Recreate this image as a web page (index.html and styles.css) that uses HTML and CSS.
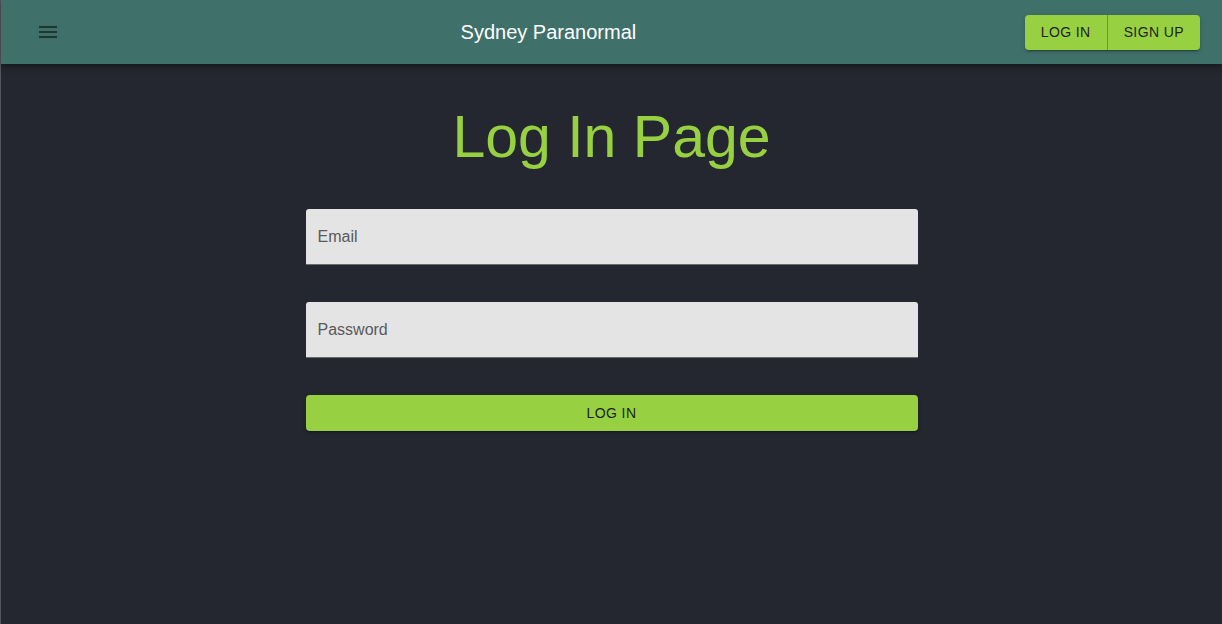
FILE: index.html
```html
<!DOCTYPE html>
<html lang="en">
<head>
<meta charset="utf-8">
<title>Sydney Paranormal</title>
<link rel="stylesheet" href="styles.css">
</head>
<body>
<div class="app">
  <header class="appbar">
    <button class="icon-btn" aria-label="menu">
      <svg viewBox="0 0 24 24" width="24" height="24"><path d="M3 18h18v-2H3v2zm0-5h18v-2H3v2zm0-7v2h18V6H3z" fill="currentColor"/></svg>
    </button>
    <div class="brand">Sydney Paranormal</div>
    <div class="btn-group">
      <button class="gbtn">Log In</button>
      <button class="gbtn">Sign Up</button>
    </div>
  </header>
  <main class="content">
    <h1 class="page-title">Log In Page</h1>
    <form class="form">
      <div class="field"><span class="label">Email</span></div>
      <div class="field"><span class="label">Password</span></div>
      <button type="button" class="submit">Log In</button>
    </form>
  </main>
</div>
</body>
</html>
```
FILE: styles.css
```css
* { box-sizing: border-box; }
html, body { margin: 0; padding: 0; height: 100%; }
body {
  background: #242730;
  font-family: "Liberation Sans", Arial, Helvetica, sans-serif;
}
.app {
  min-height: 100%;
  height: 624px;
  border-left: 1px solid rgba(255,255,255,0.22);
  display: flex;
  flex-direction: column;
}
.appbar {
  height: 64px;
  background: #40706a;
  display: flex;
  align-items: center;
  padding: 0 22px 0 23px;
  box-shadow: 0 2px 4px -1px rgba(0,0,0,0.2), 0 4px 5px 0 rgba(0,0,0,0.14), 0 1px 10px 0 rgba(0,0,0,0.12);
  position: relative;
  z-index: 1;
}
.icon-btn {
  width: 48px;
  height: 48px;
  padding: 12px;
  border: 0;
  background: transparent;
  color: #1e3531;
  display: flex;
  align-items: center;
  justify-content: center;
}
.icon-btn svg { display: block; }
.brand {
  flex: 1;
  text-align: center;
  color: #ffffff;
  font-size: 20px;
  line-height: 32px;
  margin-top: -1px;
}
.btn-group {
  display: flex;
  border-radius: 4px;
  box-shadow: 0 3px 1px -2px rgba(0,0,0,0.2), 0 2px 2px 0 rgba(0,0,0,0.14), 0 1px 5px 0 rgba(0,0,0,0.12);
}
.gbtn {
  background: #97d141;
  border: 0;
  color: #1f2320;
  font-family: inherit;
  font-size: 14px;
  letter-spacing: 0.4px;
  text-transform: uppercase;
  padding: 0 16px;
  height: 35px;
  line-height: 35px;
}
.gbtn:first-child {
  border-radius: 4px 0 0 4px;
  border-right: 1px solid #6e9c2c;
}
.gbtn:last-child {
  border-radius: 0 4px 4px 0;
}
.content {
  display: flex;
  flex-direction: column;
  align-items: center;
  padding-top: 37px;
}
.page-title {
  margin: 0;
  color: #97d141;
  font-size: 59px;
  font-weight: normal;
  line-height: 72px;
}
.form {
  width: 612px;
  margin-top: 36px;
  display: flex;
  flex-direction: column;
  gap: 37px;
}
.field {
  height: 56px;
  background: #e4e4e4;
  border-radius: 3px 3px 0 0;
  border-bottom: 1px solid #6b6b6b;
  display: flex;
  align-items: center;
  padding: 0 12px;
}
.label {
  color: #5a5a5a;
  font-size: 16px;
  line-height: 1;
  margin-top: 1px;
}
.submit {
  height: 36px;
  border: 0;
  border-radius: 4px;
  background: #97d141;
  color: #1c1f1a;
  font-family: inherit;
  font-size: 14px;
  letter-spacing: 0.4px;
  text-transform: uppercase;
  box-shadow: 0 3px 1px -2px rgba(0,0,0,0.2), 0 2px 2px 0 rgba(0,0,0,0.14), 0 1px 5px 0 rgba(0,0,0,0.12);
}
```
